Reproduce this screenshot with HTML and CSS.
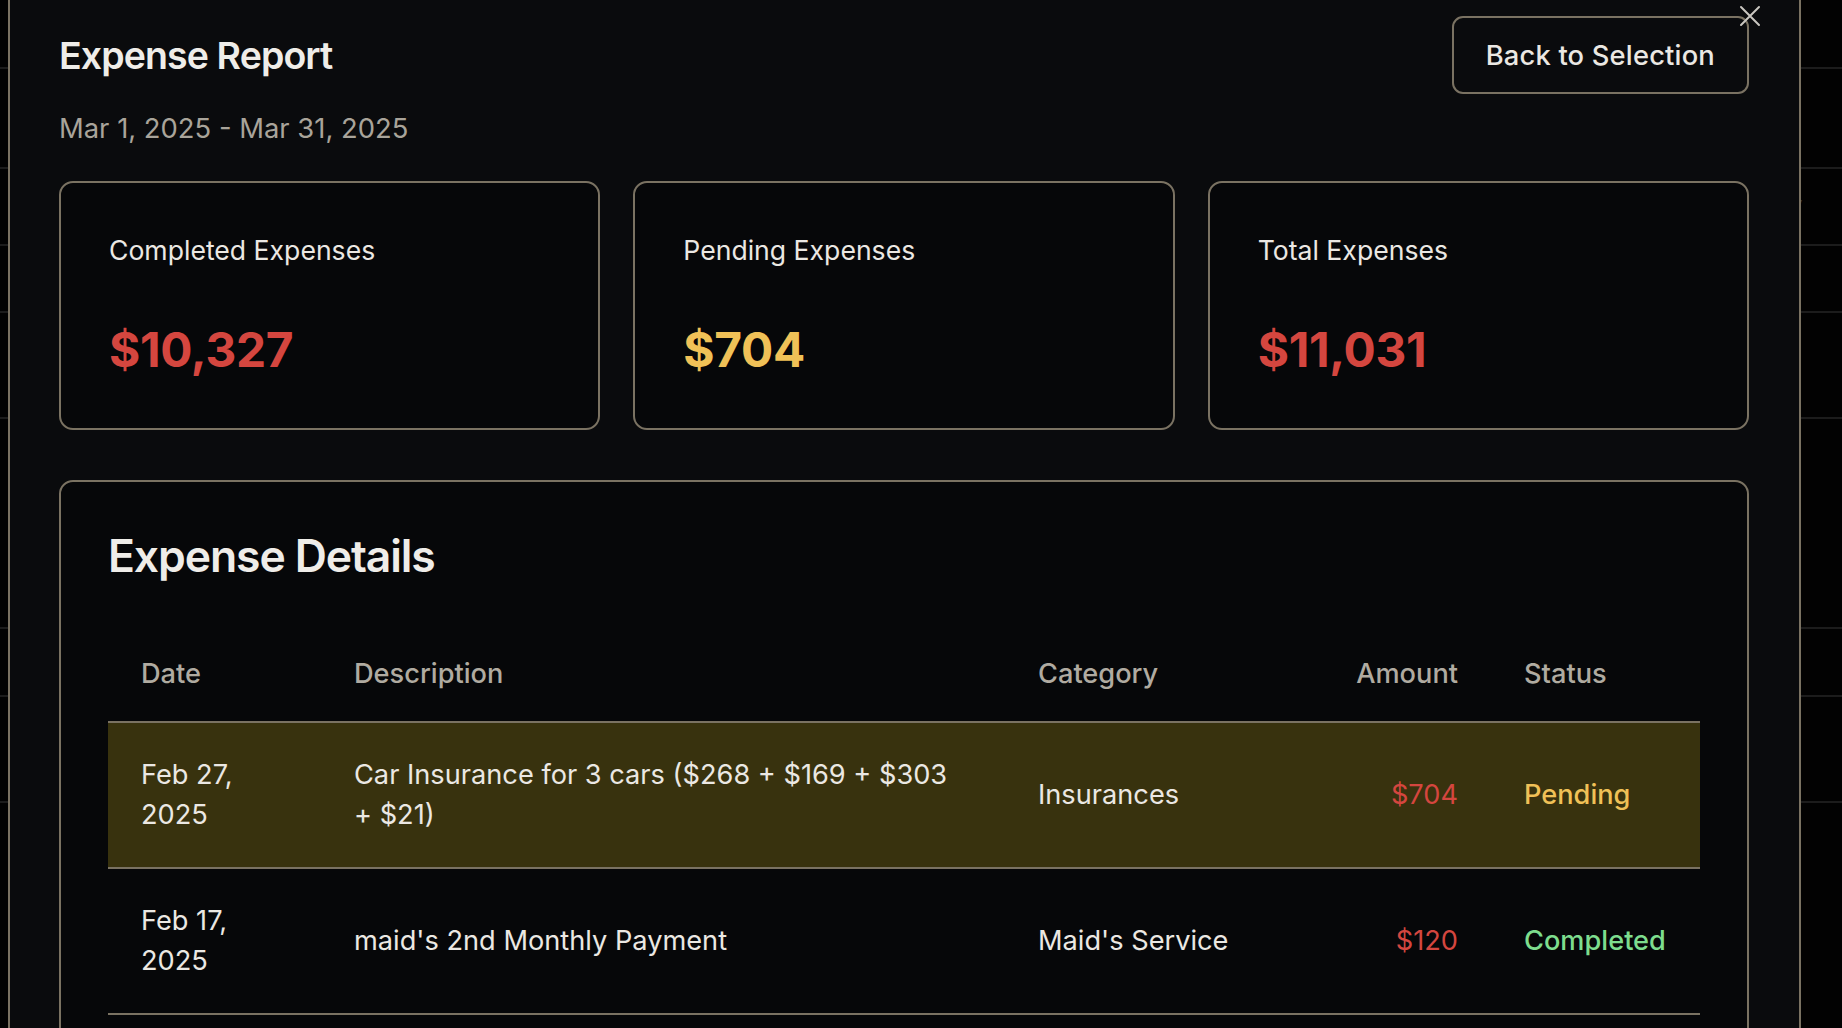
FILE: index.html
```html
<!DOCTYPE html>
<html lang="en">
<head>
<meta charset="utf-8">
<title>Expense Report</title>
<link rel="stylesheet" href="styles.css">
</head>
<body>
<div class="backdrop">
  <div class="bg-line l1"></div>
  <div class="bg-line l2"></div>
  <div class="bg-line l3"></div>
  <div class="bg-line l4"></div>
  <div class="bg-line l5"></div>
  <div class="bg-line l6"></div>
  <div class="bg-line l7"></div>
  <div class="bg-line l8"></div>
  <span class="bg-glyph g1">y</span>
</div>
<div class="modal">
  <button class="close" aria-label="Close">
    <svg width="22" height="22" viewBox="0 0 22 22"><path d="M2 2 L20 20 M20 2 L2 20" stroke="#c9c6c0" stroke-width="2" stroke-linecap="round"/></svg>
  </button>
  <header class="modal-head">
    <h1 class="title">Expense Report</h1>
    <button class="back-btn">Back to Selection</button>
  </header>
  <p class="range">Mar 1, 2025 - Mar 31, 2025</p>
  <section class="cards">
    <div class="card">
      <div class="card-label">Completed Expenses</div>
      <div class="card-value red">$10,327</div>
    </div>
    <div class="card">
      <div class="card-label">Pending Expenses</div>
      <div class="card-value yellow">$704</div>
    </div>
    <div class="card">
      <div class="card-label">Total Expenses</div>
      <div class="card-value red">$11,031</div>
    </div>
  </section>
  <section class="details">
    <h2 class="details-title">Expense Details</h2>
    <table class="table">
      <colgroup>
        <col class="c-date"><col class="c-desc"><col class="c-cat"><col class="c-amt"><col class="c-status">
      </colgroup>
      <thead>
        <tr><th>Date</th><th>Description</th><th>Category</th><th class="num">Amount</th><th>Status</th></tr>
      </thead>
      <tbody>
        <tr class="pending-row">
          <td>Feb 27, 2025</td>
          <td>Car Insurance for 3 cars ($268 + $169 + $303 + $21)</td>
          <td>Insurances</td>
          <td class="num amt">$704</td>
          <td class="st-pending">Pending</td>
        </tr>
        <tr>
          <td>Feb 17, 2025</td>
          <td>maid's 2nd Monthly Payment</td>
          <td>Maid's Service</td>
          <td class="num amt">$120</td>
          <td class="st-done">Completed</td>
        </tr>
      </tbody>
    </table>
  </section>
</div>
</body>
</html>
```

FILE: styles.css
```css
* { box-sizing: border-box; }
html, body {
  margin: 0;
  padding: 0;
  width: 1842px;
  height: 1028px;
  overflow: hidden;
  background: #000;
  font-family: Inter, "Noto Sans", "Liberation Sans", sans-serif;
  color: #ebe8e3;
}
.backdrop {
  position: absolute;
  inset: 0;
  background: #020202;
}
.bg-line {
  position: absolute;
  left: 0;
  right: 0;
  height: 2px;
  background: #1c1c1c;
}
.l1 { top: 67px; }
.l2 { top: 167px; }
.l3 { top: 244px; }
.l4 { top: 311px; }
.l5 { top: 417px; }
.l6 { top: 627px; }
.l7 { top: 695px; }
.l8 { top: 801px; }
.bg-glyph {
  position: absolute;
  font-size: 26px;
  color: #3a3a3a;
}
.g1 { left: 1788px; top: 190px; }

.modal {
  position: absolute;
  left: 8px;
  top: -20px;
  width: 1793px;
  height: 1060px;
  overflow: hidden;
  background: #0a0b0d;
  border-left: 2px solid #7a7262;
  border-right: 2px solid #7a7262;
  padding: 36px 50px 0 49px;
}
.close {
  position: absolute;
  top: 23px;
  right: 36px;
  width: 26px;
  height: 26px;
  padding: 2px;
  border: 0;
  background: transparent;
  display: flex;
  align-items: center;
  justify-content: center;
}
.modal-head {
  display: flex;
  align-items: center;
  justify-content: space-between;
}
.title {
  margin: 0;
  font-size: 37.5px;
  font-weight: 600;
  letter-spacing: -0.9px;
  color: #efede9;
}
.back-btn {
  height: 78px;
  padding: 0 32px;
  background: transparent;
  border: 2px solid #7a7262;
  border-radius: 11px;
  font-family: inherit;
  font-size: 27.3px;
  font-weight: 500;
  color: #ebe8e3;
  letter-spacing: 0.2px;
}
.range {
  margin: 14px 0 0;
  font-size: 27.4px;
  line-height: 40px;
  color: #a9a49a;
}
.cards {
  margin-top: 33px;
  display: grid;
  grid-template-columns: repeat(3, 1fr);
  gap: 33px;
}
.card {
  height: 249px;
  border: 2px solid #7a7262;
  border-radius: 14px;
  background: #060709;
  padding: 50px 48px 0;
}
.card-label {
  font-size: 26.6px;
  line-height: 34px;
  color: #ebe8e3;
}
.card-value {
  margin-top: 55px;
  font-size: 47.8px;
  line-height: 56px;
  font-weight: 700;
  letter-spacing: -0.3px;
}
.red { color: #d4463f; }
.yellow { color: #f0c157; }
.details {
  margin-top: 50px;
  border: 2px solid #7a7262;
  border-radius: 14px;
  background: #060709;
  padding: 47px 47px;
}
.details-title {
  margin: 0;
  font-size: 44.5px;
  line-height: 54px;
  font-weight: 600;
  letter-spacing: -1.1px;
  color: #efede9;
}
.table {
  margin-top: 43px;
  width: 1592px;
  border-collapse: collapse;
  table-layout: fixed;
  font-size: 27.2px;
}
.c-date { width: 213px; }
.c-desc { width: 684px; }
.c-cat { width: 295px; }
.c-amt { width: 191px; }
.c-status { width: 209px; }
.table th {
  text-align: left;
  font-weight: 500;
  color: #b0aba1;
  padding: 28px 33px 27px;
  line-height: 40px;
  border-bottom: 2px solid #7a7262;
}
.table td {
  padding: 32px 33px;
  line-height: 40px;
  color: #ebe8e3;
  border-bottom: 2px solid #7a7262;
  vertical-align: middle;
}
.table .num { text-align: right; }
.pending-row td { background: #38320e; }
.table td.amt { color: #d4463f; }
.table td.st-pending { color: #f0c157; font-weight: 500; }
.table td.st-done { color: #7ddd8e; font-weight: 500; }
```
